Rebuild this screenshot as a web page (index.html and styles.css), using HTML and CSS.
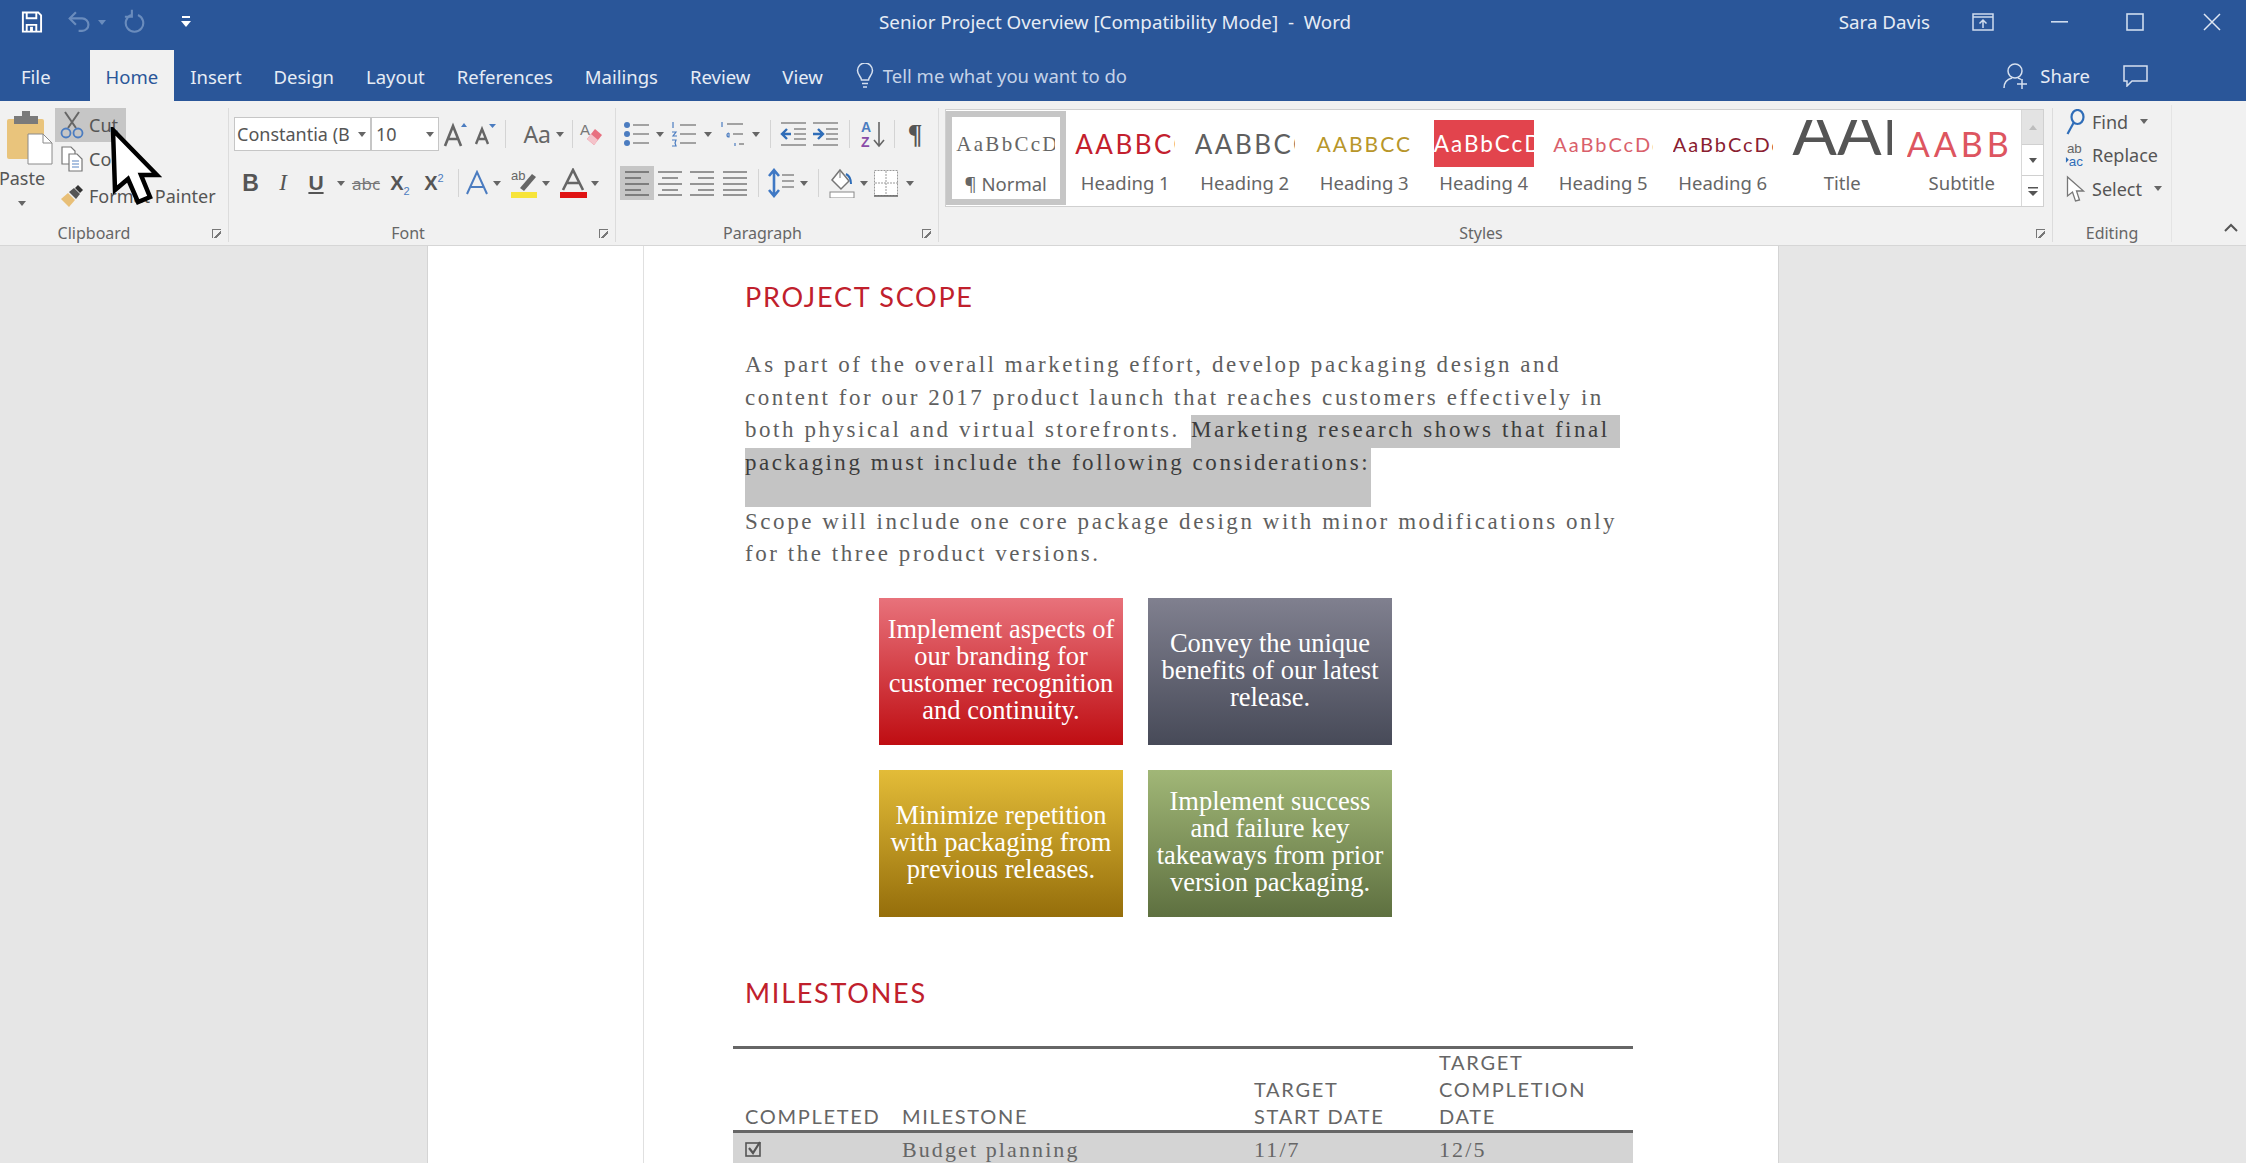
FILE: index.html
```html
<!DOCTYPE html>
<html>
<head>
<title>Senior Project Overview - Word</title>
<link rel="stylesheet" href="styles.css">
</head>
<body>
<div class="app">

  <!-- title bar -->
  <div class="titlebar">
    <div class="qat">
      <svg class="qat-save" width="23" height="24" viewBox="0 0 24 24" fill="none" stroke="#fff" stroke-width="2"><path d="M3 2h16l3 3v17H3z"/><path d="M7 2v6h10V2"/><path d="M7 22v-7h10v7"/><path d="M12 17v5" stroke-width="3"/></svg>
      <svg class="qat-undo" width="25" height="24" viewBox="0 0 28 26" fill="none" stroke="#6a8cbd" stroke-width="2.400"><path d="M3 9h14a7 7 0 0 1 0 14h-4"/><path d="M10 2L3 9l7 7"/></svg>
      <span class="caret dim"></span>
      <svg class="qat-redo" width="21" height="26" viewBox="0 0 24 28" fill="none" stroke="#6a8cbd" stroke-width="2.400"><path d="M16 6a10 10 0 1 1-8 0"/><path d="M9 0v8H1"/></svg>
      <svg class="qat-more" width="10" height="12" viewBox="0 0 10 12" fill="#fff"><rect x="1" y="0" width="8" height="2"/><path d="M0 5h10L5 11z"/></svg>
    </div>
    <div class="doc-title">Senior Project Overview [Compatibility Mode]&nbsp; -&nbsp; Word</div>
    <div class="title-right">
      <span class="user">Sara Davis</span>
      <span class="win-btn"><svg width="22" height="18" viewBox="0 0 22 18" fill="none" stroke="#cfdcee" stroke-width="1.500"><rect x="1" y="1" width="20" height="16"/><path d="M1 4h20"/><path d="M11 15V7M7.500 10.500L11 7l3.500 3.500"/></svg></span>
      <span class="win-btn"><svg width="17" height="2" viewBox="0 0 17 2"><rect width="17" height="1.600" fill="#cfdcee"/></svg></span>
      <span class="win-btn"><svg width="18" height="18" viewBox="0 0 18 18" fill="none" stroke="#cfdcee" stroke-width="1.600"><rect x="1" y="1" width="16" height="16"/></svg></span>
      <span class="win-btn close"><svg width="18" height="18" viewBox="0 0 18 18" fill="none" stroke="#dfe7f3" stroke-width="1.500"><path d="M1 1l16 16M17 1L1 17"/></svg></span>
    </div>
  </div>

  <!-- tabs -->
  <div class="tabs">
    <div class="tab file">File</div>
    <div class="tab active">Home</div>
    <div class="tab">Insert</div>
    <div class="tab">Design</div>
    <div class="tab">Layout</div>
    <div class="tab">References</div>
    <div class="tab">Mailings</div>
    <div class="tab">Review</div>
    <div class="tab">View</div>
    <div class="tell-me">
      <svg width="18" height="26" viewBox="0 0 18 26" fill="none" stroke="#d6e0ef" stroke-width="1.500"><path d="M5.500 17c0-3-4-5-4-9.500a7.500 7.500 0 0 1 15 0c0 4.500-4 6.500-4 9.500z"/><path d="M6 20.500h6M7 24h4"/></svg>
      <span>Tell me what you want to do</span>
    </div>
    <div class="tabs-right">
      <svg width="26" height="28" viewBox="0 0 26 28" fill="none" stroke="#d6e0ef" stroke-width="1.500"><circle cx="12" cy="9" r="7"/><path d="M1 26c0-6 4-9 8-10M15 16c1 .3 2 .8 3 1.500M19 17v10M14 22h10"/></svg>
      <span class="share">Share</span>
      <svg class="comment" width="25" height="22" viewBox="0 0 25 22" fill="none" stroke="#d6e0ef" stroke-width="1.500"><path d="M1 1h23v15H9l-5 5v-5H1z"/></svg>
    </div>
  </div>

  <!-- ribbon -->
  <div class="ribbon">

    <div class="group clipboard">
      <div class="group-body clip-body">
        <div class="paste">
          <svg width="50" height="54" viewBox="0 0 50 54"><rect x="3" y="8" width="37" height="40" rx="2" fill="#e9c47c"/><rect x="10" y="5" width="24" height="8" fill="#7a7a7a"/><rect x="18" y="0" width="8" height="7" fill="#7a7a7a"/><path d="M24 23h15l9 9v21H24z" fill="#fff" stroke="#8a8a8a"/><path d="M39 23v9h9" fill="none" stroke="#8a8a8a"/></svg>
          <span class="paste-label">Paste</span>
          <span class="caret"></span>
        </div>
        <div class="clip-list">
          <div class="clip-row hot">
            <svg width="24" height="28" viewBox="0 0 24 28" fill="none"><path d="M5 1l11 16M19 1L8 17" stroke="#666" stroke-width="2"/><circle cx="6" cy="22" r="4.500" stroke="#4b7cc0" stroke-width="1.800"/><circle cx="18" cy="22" r="4.500" stroke="#4b7cc0" stroke-width="1.800"/></svg>
            <span>Cut</span>
          </div>
          <div class="clip-row">
            <svg width="24" height="26" viewBox="0 0 24 26" fill="#fff" stroke="#777" stroke-width="1.200"><path d="M2 1h9l4 4v13H2z"/><path d="M9 8h8l5 5v12H9z"/><path d="M12 15h7M12 18h7M12 21h7" stroke="#5b86c4"/></svg>
            <span>Copy</span>
          </div>
          <div class="clip-row painter">
            <svg width="24" height="24" viewBox="0 0 24 24"><path d="M1 15l7-6 7 7-6 7z" fill="#e8bf77"/><path d="M9 8l5-4 6 6-4 5z" fill="#555"/><path d="M15 4l3-3 5 5-3 3z" fill="#333"/></svg>
            <span>Format Painter</span>
          </div>
        </div>
      </div>
      <div class="group-label"><span></span><span>Clipboard</span><i class="launcher"></i></div>
    </div>

    <div class="group font">
      <div class="group-body">
        <div class="row">
          <div class="combo font-name"><span>Constantia (B</span><span class="caret"></span></div>
          <div class="combo font-size"><span>10</span><span class="caret"></span></div>
          <span class="btn w30"><svg width="26" height="26" viewBox="0 0 26 26" fill="none" stroke="#666" stroke-width="2.600"><path d="M2 25L10 5l8 20M5 18h10"/><path d="M18 6l3-4 3 4z" fill="#4b7cc0" stroke="none"/></svg></span>
          <span class="btn w30"><svg width="24" height="22" viewBox="0 0 24 22" fill="none" stroke="#666" stroke-width="2.400"><path d="M2 21L8 6l6 15M4.500 16h7"/><path d="M15 1h7l-3.500 4z" fill="#4b7cc0" stroke="none"/></svg></span>
          <span class="sep"></span>
          <span class="btn w46 case">Aa</span><span class="caret tight"></span>
          <span class="sep wide"></span>
          <span class="btn w24"><svg width="24" height="26" viewBox="0 0 24 26"><text x="1" y="14" font-family="Liberation Sans" font-size="15" fill="#777">A</text><path d="M8 18l8-10 7 6-8 10z" fill="#e8707f"/><path d="M8 18l4-5 7 6-4 5z" fill="#f4c3ca"/></svg></span>
        </div>
        <div class="row">
          <span class="btn w33 bold">B</span>
          <span class="btn w32 italic">I</span>
          <span class="btn w34 under">U</span><span class="caret"></span>
          <span class="btn w34 strike">abc</span>
          <span class="btn w34 script"><span>X<sub>2</sub></span></span>
          <span class="btn w34 script"><span>X<sup>2</sup></span></span>
          <span class="sep wide"></span>
          <span class="btn w24"><svg width="24" height="26" viewBox="0 0 24 26" fill="none" stroke="#4b7cc0" stroke-width="2"><path d="M2 24L12 2l10 22M6 17h12"/></svg></span><span class="caret"></span>
          <span class="btn w28 push"><svg width="28" height="30" viewBox="0 0 28 30"><text x="1" y="12" font-family="Liberation Sans" font-size="13" fill="#666">ab</text><path d="M10 20l12-14 4 3-12 14z" fill="#666"/><rect x="1" y="24" width="26" height="6" fill="#f7e43a"/></svg></span><span class="caret"></span>
          <span class="btn w28 push"><svg width="27" height="30" viewBox="0 0 27 30" fill="none"><path d="M3 22L13 2l10 20M7 15h12" stroke="#666" stroke-width="2.600"/><rect x="0" y="24" width="27" height="6" fill="#e01313"/></svg></span><span class="caret"></span>
        </div>
      </div>
      <div class="group-label"><span></span><span>Font</span><i class="launcher"></i></div>
    </div>

    <div class="group paragraph">
      <div class="group-body">
        <div class="row">
          <span class="btn w34"><svg width="26" height="26" viewBox="0 0 26 26" stroke="#888" stroke-width="1.500"><circle cx="3" cy="4" r="3" fill="#4b7cc0" stroke="none"/><circle cx="3" cy="13" r="3" fill="#4b7cc0" stroke="none"/><circle cx="3" cy="22" r="3" fill="#4b7cc0" stroke="none"/><path d="M9 4h16M9 13h16M9 22h16"/></svg></span><span class="caret n"></span>
          <span class="btn w36"><svg width="26" height="26" viewBox="0 0 26 26" stroke="#888" stroke-width="1.500"><path d="M2 1v6M1 11h4l-3 4h4M1 19h4l-1 3 1 3H1" fill="none" stroke="#4b7cc0" stroke-width="1.200"/><path d="M9 4h16M9 13h16M9 22h16"/></svg></span><span class="caret n"></span>
          <span class="btn w36"><svg width="26" height="26" viewBox="0 0 26 26" stroke="#888" stroke-width="1.500" fill="none"><path d="M3 1v5M10 12a2 2 0 1 0 0 4v-4" stroke="#4b7cc0" stroke-width="1.200"/><path d="M16 22v3" stroke="#4b7cc0" stroke-width="1.200"/><path d="M8 3h16M14 13h10M20 23h5"/></svg></span><span class="caret n"></span>
          <span class="sep gap16"></span>
          <span class="btn w30"><svg width="26" height="26" viewBox="0 0 26 26" stroke="#888" stroke-width="1.600"><path d="M1 2h25M14 8h12M14 13h12M14 18h12M1 24h25"/><path d="M11 13H3M7 8l-5 5 5 5" stroke="#2f6db8" stroke-width="2.400" fill="none"/></svg></span>
          <span class="btn w34"><svg width="26" height="26" viewBox="0 0 26 26" stroke="#888" stroke-width="1.600"><path d="M1 2h25M14 8h12M14 13h12M14 18h12M1 24h25"/><path d="M1 13h9M6 8l5 5-5 5" stroke="#2f6db8" stroke-width="2.400" fill="none"/></svg></span>
          <span class="sep gap14"></span>
          <span class="btn w34"><svg width="26" height="28" viewBox="0 0 26 28"><text x="1" y="12" font-family="Liberation Sans" font-weight="700" font-size="14" fill="#4b7cc0">A</text><text x="1" y="27" font-family="Liberation Sans" font-weight="700" font-size="14" fill="#8a4ca8">Z</text><path d="M19 2v23M14 20l5 6 5-6" stroke="#666" stroke-width="1.600" fill="none"/></svg></span>
          <span class="sep"></span>
          <span class="btn w34 pilcrow">¶</span>
        </div>
        <div class="row">
          <span class="btn w34 on"><svg width="24" height="26" viewBox="0 0 24 26" stroke="#666" stroke-width="1.700"><path d="M0 2h24M0 8h16M0 14h24M0 20h16M0 25h24"/></svg></span>
          <span class="btn w32"><svg width="24" height="26" viewBox="0 0 24 26" stroke="#777" stroke-width="1.700"><path d="M0 2h24M4 8h16M0 14h24M4 20h16M0 25h24"/></svg></span>
          <span class="btn w32"><svg width="24" height="26" viewBox="0 0 24 26" stroke="#777" stroke-width="1.700"><path d="M0 2h24M8 8h16M0 14h24M8 20h16M0 25h24"/></svg></span>
          <span class="btn w34"><svg width="24" height="26" viewBox="0 0 24 26" stroke="#777" stroke-width="1.700"><path d="M0 2h24M0 8h24M0 14h24M0 20h24M0 25h24"/></svg></span>
          <span class="sep w12"></span>
          <span class="btn w34"><svg width="26" height="30" viewBox="0 0 26 30" fill="none"><path d="M6 3v24M1 8l5-6 5 6M1 22l5 6 5-6" stroke="#3f78c4" stroke-width="2.600"/><path d="M14 7h12M14 13h12M14 19h12" stroke="#888" stroke-width="1.600"/></svg></span><span class="caret n"></span>
          <span class="sep gap16"></span>
          <span class="btn w32"><svg width="26" height="30" viewBox="0 0 26 30" fill="none"><path d="M11 2l9 11-8 8-9-9z" fill="#fff" stroke="#777" stroke-width="1.500"/><path d="M11 2v8" stroke="#777"/><path d="M17 6c4 2 5 6 5 10" stroke="#2f6db8" stroke-width="2"/><rect x="1" y="24" width="24" height="6" fill="#fff" stroke="#888"/></svg></span><span class="caret n"></span>
          <span class="btn w32"><svg width="24" height="27" viewBox="0 0 24 27" fill="#fff" stroke="#999" stroke-width="1" stroke-dasharray="2 1"><rect x=".5" y=".5" width="23" height="25"/><path d="M12 1v25M1 13h23" fill="none"/><path d="M0 26h24" stroke="#666" stroke-dasharray="none" stroke-width="1.500"/></svg></span><span class="caret"></span>
        </div>
      </div>
      <div class="group-label"><span></span><span>Paragraph</span><i class="launcher"></i></div>
    </div>

    <div class="group styles">
      <div class="group-body gallery-wrap">
        <div class="gallery">
          <div class="style-cards">
            <div class="style-card selected"><div class="sample s-normal">AaBbCcDd</div><div class="style-name">¶ Normal</div></div>
            <div class="style-card"><div class="sample s-h1">AABBCC</div><div class="style-name">Heading 1</div></div>
            <div class="style-card"><div class="sample s-h2">AABBCC</div><div class="style-name">Heading 2</div></div>
            <div class="style-card"><div class="sample s-h3">AABBCC</div><div class="style-name">Heading 3</div></div>
            <div class="style-card"><div class="sample s-h4"><span>AaBbCcDd</span></div><div class="style-name">Heading 4</div></div>
            <div class="style-card"><div class="sample s-h5">AaBbCcDd</div><div class="style-name">Heading 5</div></div>
            <div class="style-card"><div class="sample s-h6">AaBbCcDd</div><div class="style-name">Heading 6</div></div>
            <div class="style-card"><div class="sample s-title">AAB</div><div class="style-name">Title</div></div>
            <div class="style-card"><div class="sample s-sub">AABB</div><div class="style-name">Subtitle</div></div>
          </div>
          <div class="gallery-scroll">
            <span class="scroll-btn up"><svg width="8" height="5" viewBox="0 0 8 5"><path d="M0 5l4-5 4 5z" fill="#bdbdbd"/></svg></span>
            <span class="scroll-btn down"><svg width="8" height="5" viewBox="0 0 8 5"><path d="M0 0l4 5 4-5z" fill="#555"/></svg></span>
            <span class="scroll-btn more"><svg width="10" height="9" viewBox="0 0 10 9" fill="#555"><rect width="10" height="1.500"/><path d="M0 4h10L5 9z"/></svg></span>
          </div>
        </div>
      </div>
      <div class="group-label"><span></span><span>Styles</span><i class="launcher"></i></div>
    </div>

    <div class="group editing">
      <div class="group-body edit-list">
        <div class="edit-row">
          <svg width="20" height="26" viewBox="0 0 20 26" fill="none" stroke="#2f6db8" stroke-width="2.200"><ellipse cx="12" cy="8" rx="6" ry="7"/><path d="M8 14L2 25"/></svg>
          <span>Find</span><span class="caret"></span>
        </div>
        <div class="edit-row">
          <svg width="22" height="28" viewBox="0 0 22 28"><text x="2" y="12" font-family="Liberation Sans" font-size="14" fill="#666">ab</text><text x="4" y="26" font-family="Liberation Sans" font-size="14" fill="#2f6db8">ac</text><path d="M1 16l3 3 -3 3z" fill="#2f6db8"/></svg>
          <span>Replace</span>
        </div>
        <div class="edit-row">
          <svg width="20" height="28" viewBox="0 0 20 28" fill="#fff" stroke="#777" stroke-width="1.300"><path d="M2 2v19l5-4 3 9 4-1-3-9h7z"/></svg>
          <span>Select</span><span class="caret"></span>
        </div>
      </div>
      <div class="group-label"><span>Editing</span></div>
    </div>

    <div class="collapse"><svg width="14" height="9" viewBox="0 0 14 9" fill="none" stroke="#555" stroke-width="2"><path d="M1 8l6-6 6 6"/></svg></div>
  </div>

  <!-- document -->
  <div class="doc-area">
    <div class="page">
      <div class="page-body">
        <h2 class="heading first">PROJECT SCOPE</h2>

        <div class="para">
          <div class="line">As part of the overall marketing effort, develop packaging design and</div>
          <div class="line">content for our 2017 product launch that reaches customers effectively in</div>
          <div class="line"><span class="before-sel">both physical and virtual storefronts.</span><span class="sel sel-a">Marketing research shows that final</span></div>
          <div class="line"><span class="sel sel-b">packaging must include the following considerations:</span></div>
          <div class="sel-empty"></div>
        </div>

        <div class="para">
          <div class="line tight">Scope will include one core package design with minor modifications only</div>
          <div class="line tight">for the three product versions.</div>
        </div>

        <div class="boxes">
          <div class="box red">Implement aspects of<br>our branding for<br>customer recognition<br>and continuity.</div>
          <div class="box grey">Convey the unique<br>benefits of our latest<br>release.</div>
          <div class="box gold">Minimize repetition<br>with packaging from<br>previous releases.</div>
          <div class="box green">Implement success<br>and failure key<br>takeaways from prior<br>version packaging.</div>
        </div>

        <h2 class="heading second">MILESTONES</h2>

        <table class="milestones">
          <colgroup><col class="c1"><col class="c2"><col class="c3"><col class="c4"></colgroup>
          <tr>
            <th>COMPLETED</th>
            <th>MILESTONE</th>
            <th>TARGET<br>START DATE</th>
            <th>TARGET<br>COMPLETION<br>DATE</th>
          </tr>
          <tr class="shaded">
            <td><svg width="18" height="16" viewBox="0 0 18 16" fill="none" stroke="#555" stroke-width="1.600"><rect x="1" y="2" width="14" height="13"/><path d="M4 7l4 5 7-11" stroke-width="2.200"/></svg></td>
            <td>Budget planning</td>
            <td>11/7</td>
            <td>12/5</td>
          </tr>
        </table>
      </div>
    </div>
  </div>

  <!-- mouse pointer from the recording -->
  <svg class="pointer" width="52" height="80" viewBox="110 127 52 80"><path d="M113 130L157 175H141L150 197 138 202 128 179 115 190Z" fill="#fff" stroke="#000" stroke-width="4.500"/></svg>
</div>
</body>
</html>
```

FILE: styles.css
```css
html, body {
    margin: 0;
    height: 100%;
    overflow: hidden;
}

body {
    font-family: "Noto Sans", "Open Sans", sans-serif;
    color: #555;
}

.app {
    position: relative;
    display: flex;
    flex-direction: column;
    height: 1163px;
}

/* title bar */
.titlebar {
    display: flex;
    align-items: center;
    height: 50px;
    flex: none;
    padding-bottom: 6px;
    box-sizing: border-box;
    background: #2a5699;
    color: #e6ecf5;
    font-size: 18.800px;
}

.qat {
    display: flex;
    align-items: center;
    width: 879px;
    flex: none;
    padding-left: 20px;
    box-sizing: border-box;
}

.qat-undo {
    margin-left: 24px;
}

.qat-redo {
    margin-left: 14px;
}

.qat-more {
    margin-left: 36px;
}

.caret {
    display: inline-block;
    flex: none;
    width: 0;
    height: 0;
    margin: 0 4px;
    border-left: 4px solid transparent;
    border-right: 4px solid transparent;
    border-top: 5px solid #666;
}

.caret.dim {
    border-top-color: #6a8cbd;
    margin-left: 6px;
}

.caret.tight {
    margin: 0 1px;
}

.doc-title {
    white-space: nowrap;
}

.title-right {
    display: flex;
    align-items: center;
    margin-left: auto;
}

.user {
    margin-right: 15px;
}

.win-btn {
    display: flex;
    justify-content: center;
    width: 76px;
}

.win-btn.close {
    width: 73px;
    padding-left: 5px;
    box-sizing: border-box;
}

/* tabs */
.tabs {
    display: flex;
    align-items: stretch;
    height: 51px;
    flex: none;
    background: #2a5699;
    color: #e6ecf5;
    font-size: 18.500px;
}

.tab {
    display: flex;
    align-items: center;
    padding: 2px 16px 0;
}

.tab.file {
    margin: 0 23px 0 5px;
}

.tab.active {
    background: #f1f1f1;
    color: #2a5699;
}

.tell-me {
    display: flex;
    align-items: center;
    gap: 9px;
    margin-left: 17px;
    color: #c5d3e8;
}

.tabs-right {
    display: flex;
    align-items: center;
    margin-left: auto;
    padding-right: 98px;
}

.share {
    margin-left: 11px;
}

.comment {
    margin-left: 33px;
}

/* ribbon */
.ribbon {
    position: relative;
    display: flex;
    height: 145px;
    flex: none;
    background: #f1f1f1;
    border-bottom: 1px solid #d6d6d6;
    box-sizing: border-box;
    font-size: 18px;
}

.group {
    display: flex;
    flex-direction: column;
    flex: none;
    height: 134px;
    margin-top: 7px;
    border-right: 1px solid #dcdcdc;
    box-sizing: border-box;
}

.group-body {
    flex: 1;
    display: flex;
    flex-direction: column;
    gap: 15px;
    padding-top: 9px;
}

.group-label {
    display: grid;
    grid-template-columns: 1fr auto 1fr 26px;
    align-items: center;
    height: 20px;
    padding-right: 7px;
    font-size: 16px;
    color: #666;
}

.launcher {
    grid-column: 4;
    justify-self: end;
    width: 8px;
    height: 8px;
    border-top: 1px solid #777;
    border-left: 1px solid #777;
    background: linear-gradient(135deg, transparent 55%, #777 55%, #777 70%, transparent 70%);
}

.clipboard {
    width: 229px;
}

.clipboard .group-label {
    grid-template-columns: 1fr auto 1fr 33px;
}

.font {
    width: 387px;
    padding-left: 5px;
}

.paragraph {
    width: 323px;
    padding-left: 4px;
}

.styles {
    width: 1114px;
}

.styles .group-label {
    grid-template-columns: 1fr auto 1fr 22px;
}

.editing {
    width: 119px;
    height: 137px;
    margin-top: 4px;
    border-right: 1px solid #e4e4e4;
}

.row {
    display: flex;
    align-items: center;
    height: 34px;
}

.btn {
    display: flex;
    align-items: center;
    justify-content: center;
    height: 34px;
    flex: none;
}

.w24 { width: 24px; }
.w28 { width: 28px; }
.w30 { width: 30px; }
.w32 { width: 32px; }
.w33 { width: 33px; }
.w34 { width: 34px; }
.w36 { width: 36px; }
.w46 { width: 46px; }

.btn.on {
    background: #c6c6c6;
}

.btn.push {
    margin-left: 5px;
}

.sep {
    width: 8px;
    height: 28px;
    flex: none;
    background: linear-gradient(#d4d4d4, #d4d4d4) center / 1px 100% no-repeat;
}

.sep.wide { width: 14px; }
.sep.w12 { width: 12px; }
.sep.gap14 { width: 14px; }
.sep.gap16 { width: 16px; }

.caret.n {
    margin: 0 2px;
}

.case {
    justify-content: flex-end;
    padding-right: 4px;
    box-sizing: border-box;
    font-size: 23px;
    color: #666;
}

.bold {
    font: 700 23px "Liberation Sans", sans-serif;
    color: #555;
}

.italic {
    font: italic 23px "Liberation Serif", serif;
    color: #555;
}

.under {
    font: 700 21px "Liberation Sans", sans-serif;
    text-decoration: underline;
    color: #555;
}

.strike {
    font-size: 17px;
    text-decoration: line-through;
    color: #777;
}

.script {
    font: 700 20px "Liberation Sans", sans-serif;
    color: #555;
}

.script sub, .script sup {
    font-size: 11px;
    font-weight: 400;
    line-height: 0;
    color: #4b7cc0;
}

.pilcrow {
    font: 700 27px "Liberation Serif", serif;
    color: #555;
}

/* font combos */
.combo {
    display: flex;
    align-items: center;
    justify-content: space-between;
    height: 34px;
    flex: none;
    background: #fff;
    border: 1px solid #c6c6c6;
    box-sizing: border-box;
    padding-left: 2px;
    font-size: 18px;
    white-space: nowrap;
}

.font-name {
    width: 137px;
}

.font-size {
    width: 68px;
    padding-left: 4px;
    margin-right: 2px;
}

/* clipboard */
.clip-body {
    flex-direction: row;
    gap: 0;
    padding-top: 0;
}

.paste {
    display: flex;
    flex-direction: column;
    align-items: center;
    width: 55px;
    flex: none;
    padding-top: 3px;
    box-sizing: border-box;
}

.paste svg {
    margin-left: 2px;
}

.paste-label {
    margin: 1px 11px 0 0;
    line-height: 24px;
}

.paste .caret {
    margin: 11px 11px 0 0;
}

.clip-row {
    display: flex;
    align-items: center;
    gap: 5px;
    width: 172px;
    height: 34px;
    padding-left: 5px;
    box-sizing: border-box;
    white-space: nowrap;
}

.clip-row.hot {
    width: 71px;
    background: #c6c6c6;
}

.clip-row.painter {
    height: 36px;
    margin-top: 2px;
}

/* style gallery */
.gallery-wrap {
    padding: 1px 0 0 6px;
}

.gallery {
    display: flex;
    width: 1099px;
    height: 98px;
    border: 1px solid #d0d0d0;
    box-sizing: border-box;
    background: #fff;
}

.style-cards {
    display: grid;
    grid-template-columns: repeat(9, 119.500px);
    width: 1075px;
    flex: none;
}

.style-card {
    display: flex;
    flex-direction: column;
    align-items: center;
    box-sizing: border-box;
    padding-top: 10px;
    overflow: hidden;
}

.style-card.selected {
    border: 6px solid #c6c6c6;
    height: 94px;
    margin: 1px 0 0;
    padding-top: 4px;
}

.sample {
    width: 100px;
    height: 47px;
    overflow: hidden;
    white-space: nowrap;
    display: flex;
    align-items: center;
    font-family: "Lato", sans-serif;
}

.style-name {
    margin-top: 4px;
    font-size: 18.500px;
    color: #666;
    line-height: 24px;
}

.selected .sample {
    width: 99px;
    font: 21px "Liberation Serif", serif;
    letter-spacing: 2.300px;
    color: #666;
}

.s-h1 { font-size: 26px; letter-spacing: 2.500px; color: #c3202e; }
.s-h2 { font-size: 26px; letter-spacing: 2.500px; color: #5f5f5f; }
.s-h3 { font-size: 21px; letter-spacing: 2px; color: #b8962a; justify-content: center; }
.s-h4 { font-size: 22.500px; letter-spacing: 2px; color: #fff; background: #e2444d; }
.s-h5 { font-size: 20px; letter-spacing: 2px; color: #d95f6b; }
.s-h6 { font-size: 20px; letter-spacing: 2px; color: #8a2030; }
.s-title { font-size: 66px; font-weight: 400; color: #555; align-items: flex-start; line-height: 19px; }
.s-sub { font-size: 34px; letter-spacing: 4px; color: #dd5560; box-sizing: border-box; width: 110px; }

.gallery-scroll {
    display: flex;
    flex-direction: column;
    flex: 1;
    border-left: 1px solid #d8d8d8;
}

.scroll-btn {
    display: flex;
    align-items: center;
    justify-content: center;
    border-bottom: 1px solid #d0d0d0;
    background: #fff;
}

.scroll-btn.up {
    height: 34px;
    background: #e3e3e3;
}

.scroll-btn.down {
    height: 30px;
}

.scroll-btn.more {
    flex: 1;
    border-bottom: 0;
}

/* editing */
.edit-list {
    gap: 0;
    padding: 0 0 0 12px;
}

.edit-row {
    display: flex;
    align-items: center;
    gap: 6px;
    height: 33.500px;
}

.edit-row svg {
    width: 21px;
    flex: none;
}

.edit-row .caret {
    margin-left: 6px;
}

.editing .group-label {
    grid-template-columns: 1fr;
    justify-items: center;
    padding-right: 0;
}

.collapse {
    display: flex;
    align-self: flex-start;
    margin: 122px 0 0 52px;
}

/* document */
.doc-area {
    flex: 1;
    overflow: hidden;
    background: #e6e6e6;
    padding-left: 428px;
}

.page {
    width: 1350px;
    height: 100%;
    background: #fff;
    box-shadow: 0 0 0 1px #d4d4d4;
}

.page-body {
    margin-left: 215px;
    padding-left: 89px;
    height: 100%;
    border-left: 1px solid #e0e0e0;
    box-sizing: border-box;
    width: 1000px;
}

.heading {
    margin: 0 0 0 12px;
    font: 400 27px/34px "Lato", sans-serif;
    letter-spacing: 1.750px;
    color: #c0202c;
}

.heading.first {
    padding-top: 34px;
    margin-bottom: 36px;
}

.heading.second {
    margin-top: 59px;
    margin-bottom: 36px;
}

.para {
    padding-left: 12px;
    font: 23px "Liberation Serif", serif;
    letter-spacing: 2.550px;
    color: #5f5f5f;
}

.line {
    height: 32.700px;
    line-height: 30px;
    white-space: nowrap;
}

.line.tight {
    height: 32px;
    line-height: 29px;
}

.before-sel {
    display: inline-block;
    width: 446px;
}

.sel {
    display: inline-block;
    height: 32.700px;
    vertical-align: top;
    background: #c4c4c4;
    color: #3c3c3c;
}

.sel-a {
    width: 429px;
}

.sel-b {
    width: 626px;
}

.sel-empty {
    width: 626px;
    height: 26px;
    background: #c4c4c4;
}

.boxes {
    display: grid;
    grid-template-columns: 244px 244px;
    grid-auto-rows: 147px;
    gap: 25px;
    margin: 27px 0 0 146px;
}

.box {
    display: flex;
    align-items: center;
    justify-content: center;
    padding-bottom: 2px;
    box-sizing: border-box;
    text-align: center;
    white-space: nowrap;
    font: 26.500px/27px "Liberation Serif", serif;
    color: #fff;
}

.box.red { background: linear-gradient(#e8727b, #bf0d12); }
.box.grey { background: linear-gradient(#80808f, #474a58); }
.box.gold { background: linear-gradient(#e3bc38, #956e0b); }
.box.green { background: linear-gradient(#a1b777, #5e7040); }

/* milestones table */
.milestones {
    width: 900px;
    table-layout: fixed;
    border-collapse: collapse;
    border-top: 3px solid #666;
    color: #666;
}

.c1 { width: 157px; }
.c2 { width: 352px; }
.c3 { width: 185px; }
.c4 { width: 206px; }

.milestones th {
    vertical-align: bottom;
    padding: 0 12px;
    text-align: left;
    font: 400 20px/27px "Lato", sans-serif;
    letter-spacing: 1.700px;
    border-bottom: 3px solid #666;
    white-space: nowrap;
}

.milestones td {
    padding: 4px 12px;
    font: 22px/26px "Liberation Serif", serif;
    letter-spacing: 2.100px;
}

.shaded {
    background: #d4d4d4;
}

/* pointer */
.pointer {
    position: absolute;
    left: 110px;
    top: 127px;
}
```
